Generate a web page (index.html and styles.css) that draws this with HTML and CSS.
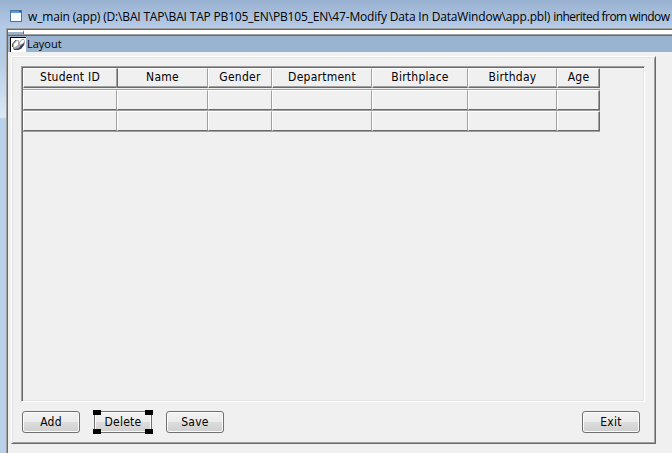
FILE: index.html
```html
<!DOCTYPE html>
<html lang="en">
<head>
<meta charset="utf-8">
<title>w_main</title>
<link rel="stylesheet" href="styles.css">
</head>
<body>
<div class="frame">
  <header class="caption">
    <svg class="win-icon" width="12" height="12" viewBox="0 0 12 12"><rect x=".5" y=".5" width="11" height="11" fill="#f8fbff" stroke="#4c7498"/><path d="M1 1h10v2H1z" fill="#5b9be5"/><path d="M9 1h2v1H9z" fill="#1d4fa0"/></svg>
    <span class="caption-text">w_main (app) (D:\BAI TAP\BAI TAP PB105_EN\PB105_EN\47-Modify Data In DataWindow\app.pbl) <span class="origin">inherited from window</span></span>
  </header>
  <main class="client">
    <div class="tab-strip"><i></i></div>
    <div class="layout-bar">
      <svg width="16" height="15" viewBox="0 0 16 15"><path d="M0 0h16v15H0z" fill="#fff"/><path d="M0 15V0h16v1H1v14z" fill="#000"/><path d="M2.5 7L6 3h3v2l3-3h2l1 2v3l-4 5H5l-2-1z" fill="#a9a9b2"/><path d="M4 7l3-3h1v4l-3 2H4zM10 6l2-3h2v2l-3 3z" fill="#fff"/><path d="M3 11l2 1 4-1 2-3 3-2v2l-3 4-3 1H4z" fill="#404060"/><path d="M2.5 10V7L6 3" stroke="#555" fill="none"/></svg>
      <span class="layout-text">Layout</span>
    </div>
    <section class="form">
      <div class="datawindow">
        <div class="row head"><div>Student ID</div><div>Name</div><div>Gender</div><div>Department</div><div>Birthplace</div><div>Birthday</div><div>Age</div></div>
        <div class="row first"><div></div><div></div><div></div><div></div><div></div><div></div><div></div></div>
        <div class="row last"><div></div><div></div><div></div><div></div><div></div><div></div><div></div></div>
      </div>
      <div class="actions">
        <button>Add</button>
        <button class="selected">Delete<i class="tl"></i><i class="tr"></i><i class="bl"></i><i class="br"></i></button>
        <button>Save</button>
        <button class="exit">Exit</button>
      </div>
    </section>
  </main>
</div>
</body>
</html>
```
FILE: styles.css
```css
* { box-sizing: border-box; }
body { margin: 0; width: 672px; height: 453px; overflow: hidden; font: 12px "DejaVu Sans Condensed", "DejaVu Sans", sans-serif; font-stretch: condensed; letter-spacing: .25px; color: #000; }
.frame { height: 453px; display: flex; flex-direction: column; background: linear-gradient(#98b2d2 0, #b3cbe6 30px, #b5cce6 60px, #dce8f5 117px, #b9d1ea 119px); }
.caption { flex: 0 0 28px; display: flex; align-items: center; padding: 4px 0 0 10px; gap: 6px; background: linear-gradient(#98b1d0, #b6cce8); }
.win-icon { flex: none; }
.caption-text { font: 12px "Open Sans", sans-serif; white-space: nowrap; letter-spacing: -.17px; }
.origin { letter-spacing: -.55px; }
.client { flex: 1; margin-left: 6px; border-top: 1px solid #a0a0a0; border-left: 1px solid #a0a0a0; box-shadow: inset 1px 1px #696969; padding: 1px 0 0 1px; background: #f0f0f0; }
.tab-strip { height: 6px; background: #fff; border-bottom: 1px solid #696969; box-shadow: inset 0 -1px #a0a0a0; }
.tab-strip i { display: block; width: 16px; height: 4px; background: #99b4d1; border-right: 1px solid #696969; border-top: 2px solid #fff; }
.layout-bar { height: 16px; background: #99b4d1; display: flex; padding: 1px 0 0 2px; }
.layout-text { font: 11px/14px "Open Sans", sans-serif; letter-spacing: 0; margin-left: 1px; }
.form { margin: 4px 0 0 3px; width: 645px; height: 388px; border: 1px solid; border-color: #fff #696969 #696969 #fff; box-shadow: inset 1px 1px #e3e3e3, inset -1px -1px #a0a0a0; padding: 9px 0 0 9px; }
.datawindow { width: 624px; height: 336px; border: 1px solid; border-color: #a0a0a0 #fff #fff #a0a0a0; box-shadow: inset 1px 1px #696969, inset -1px -1px #e3e3e3; padding: 1px 0 0 1px; }
.row { display: grid; grid-template-columns: 94px 91px 64px 100px 96px 89px 43px; width: 577px; height: 21px; }
.row div { border: 1px solid; border-color: #fff #a0a0a0 #696969 #fff; text-align: center; line-height: 17px; }
.row div:last-child { border-right-color: #696969; box-shadow: inset -1px 0 #a0a0a0; }
.head { height: 20px; }
.head div { box-shadow: inset 0 -1px #a0a0a0; }
.head div:last-child { box-shadow: inset -1px -1px #a0a0a0; }
.head div:nth-child(2) { border-left-color: #696969; }
.row.first { margin-top: 1px; border-top: 1px solid #a0a0a0; border-bottom: 1px solid #a0a0a0; height: 22px; }
.row.last { border-bottom: 1px solid #a0a0a0; }
.actions { display: flex; gap: 14px; margin: 9px 0 0 1px; width: 618px; }
button { position: relative; width: 58px; height: 22px; padding: 0; border: 1px solid #707070; border-radius: 3px; box-shadow: inset 0 0 0 1px #fcfcfc; background: linear-gradient(#f2f2f2 0, #ebebeb 50%, #ddd 50%, #cfcfcf); font: inherit; letter-spacing: inherit; color: #000; }
.exit { margin-left: auto; }
.selected i { position: absolute; width: 8px; height: 5px; background: #000; }
.tl { left: -2px; top: -2px; } .tr { right: -2px; top: -2px; }
.bl { left: -2px; bottom: -2px; } .br { right: -2px; bottom: -2px; }
```
